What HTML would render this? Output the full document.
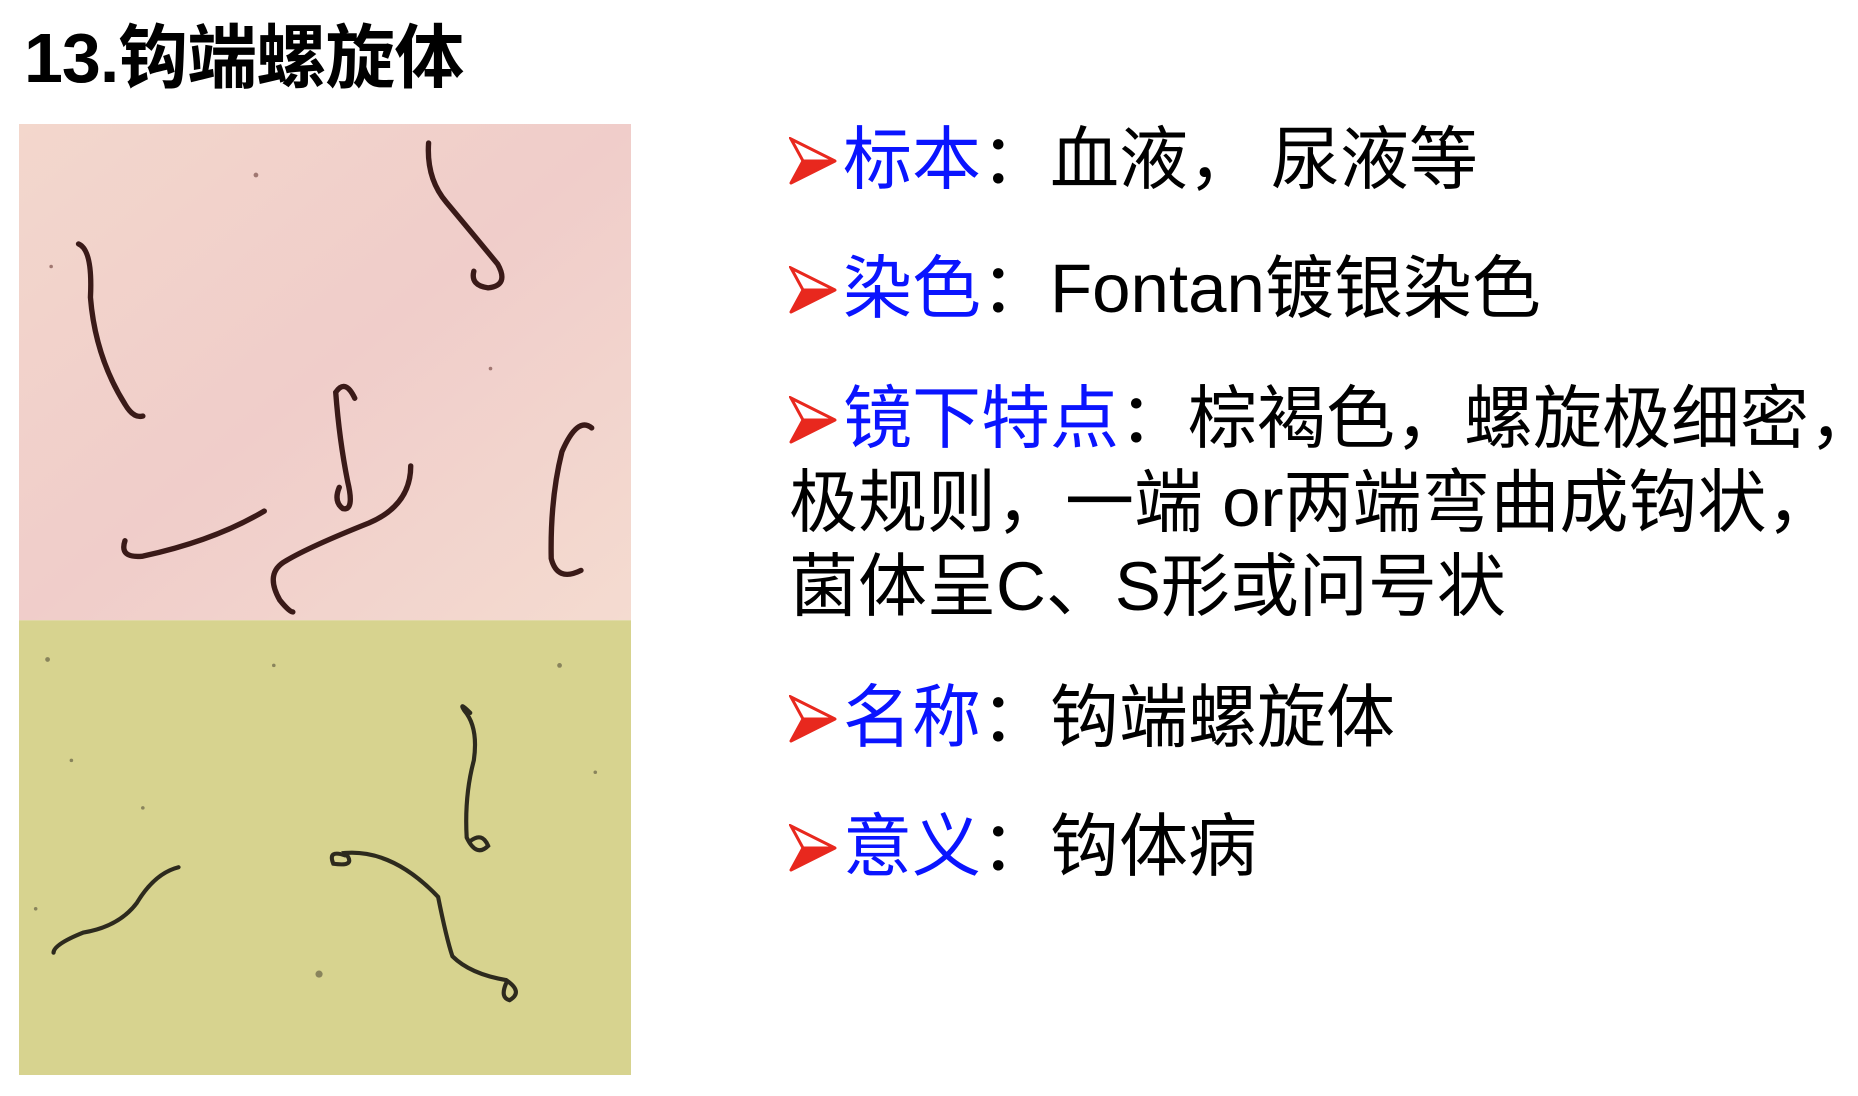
<!DOCTYPE html>
<html><head><meta charset="utf-8"><style>
html,body{margin:0;padding:0;background:#fff;width:1858px;height:1096px;overflow:hidden;position:relative}
.t{position:absolute;left:24px;top:2px;font:bold 70px "Liberation Sans","Noto Sans CJK SC",sans-serif;color:#000;letter-spacing:-1px}
.l{position:absolute;left:789px;font-family:"Liberation Sans","Noto Sans CJK SC",sans-serif;font-size:69px;color:#000;white-space:nowrap;line-height:84px}
.b{color:#0a14ff}
.a{display:inline-block;width:54px;height:48px;vertical-align:-2px}
</style></head><body>
<div class="t">13.钩端螺旋体</div>
<svg style="position:absolute;left:19px;top:124px" width="612" height="951" viewBox="16 104 514 801" preserveAspectRatio="none">
<defs>
<linearGradient id="p" x1="0" y1="0" x2="1" y2="1"><stop offset="0" stop-color="#f3d7cc"/><stop offset=".5" stop-color="#f0cdca"/><stop offset="1" stop-color="#f4dbd0"/></linearGradient>
</defs>
<rect x="16" y="104" width="514" height="418" fill="url(#p)"/>
<rect x="16" y="522" width="514" height="383" fill="#d7d38f"/>
<g fill="none" stroke="#3a1a18" stroke-width="4.5" stroke-linecap="round">
<path d="M66 205 Q78 210 76 250 Q80 300 105 340 Q112 352 120 350"/>
<path d="M360 120 Q358 150 375 170 Q400 200 418 222 Q428 240 410 242 Q395 240 398 228"/>
<path d="M298 335 Q290 318 282 330 Q285 370 292 405 Q298 430 288 428 Q280 422 285 410"/>
<path d="M222 430 Q180 455 120 468 Q100 470 105 455"/>
<path d="M345 392 Q345 425 310 440 Q260 460 240 472 Q222 482 235 505 Q243 515 246 515"/>
<path d="M497 360 Q485 350 472 380 Q462 420 463 470 Q468 490 488 480"/>
</g>
<g fill="none" stroke="#2d2a1e" stroke-width="3.5" stroke-linecap="round">
<path d="M150 730 Q130 735 115 760 Q100 780 70 785 Q45 795 45 802"/>
<path d="M395 600 Q385 590 390 598 Q402 612 398 640 Q390 670 392 705 Q400 722 410 712 Q405 700 395 708"/>
<path d="M290 720 Q275 715 280 727 Q300 730 290 718 Q330 715 368 755 Q375 790 380 805 Q395 820 425 825 Q440 835 428 842 Q420 840 425 828"/>
</g>
<g fill="#55503a" opacity=".6">
<circle cx="40" cy="555" r="2"/><circle cx="60" cy="640" r="1.5"/><circle cx="268" cy="820" r="3"/><circle cx="230" cy="560" r="1.5"/><circle cx="470" cy="560" r="2"/><circle cx="30" cy="765" r="1.5"/><circle cx="120" cy="680" r="1.5"/><circle cx="500" cy="650" r="1.5"/>
</g>
<g fill="#6a3b36" opacity=".6"><circle cx="215" cy="147" r="2"/><circle cx="43" cy="224" r="1.5"/><circle cx="412" cy="310" r="1.5"/></g>
</svg>
<div class="l" style="top:118px"><svg class="a" viewBox="0 0 54 48"><polygon points="2,2 46,24 14,24" fill="#fff" stroke="#e8281e" stroke-width="3"/><polygon points="2,46 46,24 14,24" fill="#e8281e" stroke="#e8281e" stroke-width="3" stroke-linejoin="round"/></svg><span class="b">标本</span>：血液，&#8201;尿液等</div>
<div class="l" style="top:247px"><svg class="a" viewBox="0 0 54 48"><polygon points="2,2 46,24 14,24" fill="#fff" stroke="#e8281e" stroke-width="3"/><polygon points="2,46 46,24 14,24" fill="#e8281e" stroke="#e8281e" stroke-width="3" stroke-linejoin="round"/></svg><span class="b">染色</span>：Fontan镀银染色</div>
<div class="l" style="top:377px"><svg class="a" viewBox="0 0 54 48"><polygon points="2,2 46,24 14,24" fill="#fff" stroke="#e8281e" stroke-width="3"/><polygon points="2,46 46,24 14,24" fill="#e8281e" stroke="#e8281e" stroke-width="3" stroke-linejoin="round"/></svg><span class="b">镜下特点</span>：棕褐色，螺旋极细密，<br>极规则，一端 or两端弯曲成钩状，<br>菌体呈C、S形或问号状</div>
<div class="l" style="top:676px"><svg class="a" viewBox="0 0 54 48"><polygon points="2,2 46,24 14,24" fill="#fff" stroke="#e8281e" stroke-width="3"/><polygon points="2,46 46,24 14,24" fill="#e8281e" stroke="#e8281e" stroke-width="3" stroke-linejoin="round"/></svg><span class="b">名称</span>：钩端螺旋体</div>
<div class="l" style="top:805px"><svg class="a" viewBox="0 0 54 48"><polygon points="2,2 46,24 14,24" fill="#fff" stroke="#e8281e" stroke-width="3"/><polygon points="2,46 46,24 14,24" fill="#e8281e" stroke="#e8281e" stroke-width="3" stroke-linejoin="round"/></svg><span class="b">意义</span>：钩体病</div>
</body></html>
